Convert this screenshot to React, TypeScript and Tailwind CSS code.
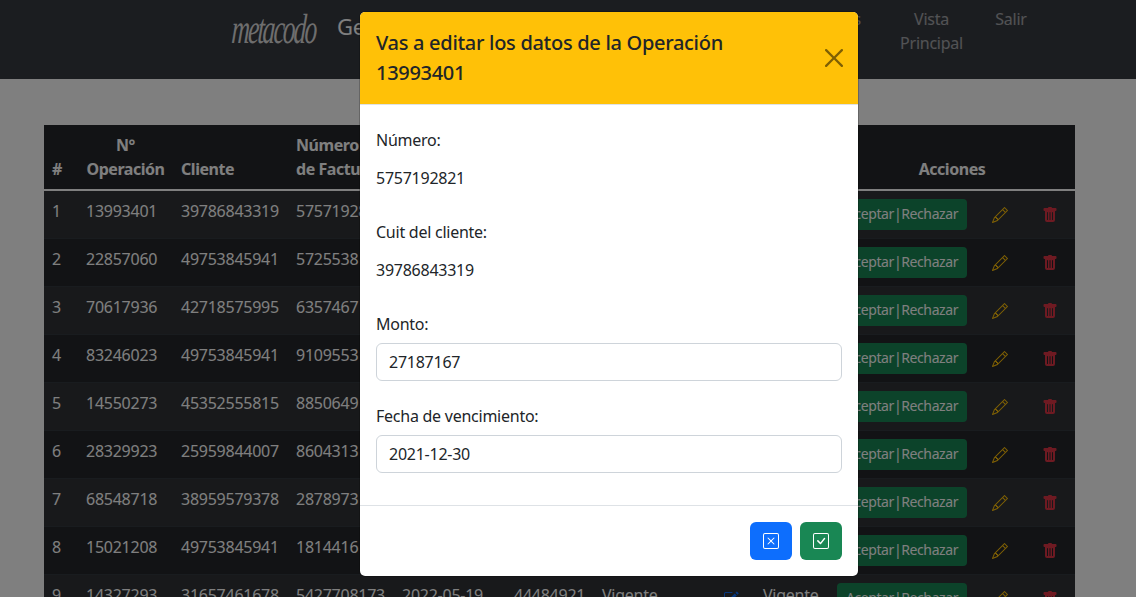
import { BsCheckSquare, BsPencil, BsPencilSquare, BsTrashFill, BsXSquare } from 'react-icons/bs';

type Row = {
  id: number;
  operation: string;
  client: string;
  invoice: string;
};

const rows: Row[] = [
  { id: 1, operation: '13993401', client: '39786843319', invoice: '5757192821' },
  { id: 2, operation: '22857060', client: '49753845941', invoice: '5725538' },
  { id: 3, operation: '70617936', client: '42718575995', invoice: '6357467' },
  { id: 4, operation: '83246023', client: '49753845941', invoice: '9109553' },
  { id: 5, operation: '14550273', client: '45352555815', invoice: '8850649' },
  { id: 6, operation: '28329923', client: '25959844007', invoice: '8604313' },
  { id: 7, operation: '68548718', client: '38959579378', invoice: '2878973' },
  { id: 8, operation: '15021208', client: '49753845941', invoice: '1814416' },
  { id: 9, operation: '14327293', client: '31657461678', invoice: '5427708173' },
];

export default function App() {
  return (
    <div className="relative h-[597px] w-[1136px] overflow-hidden bg-white font-['Noto_Sans',sans-serif] text-base tracking-[-0.25px] text-[#212529]">
      <nav className="flex h-[79px] bg-[#373a41]">
        <div className="ml-[232px] flex items-start">
          <span className="mt-[5px] w-[105px] origin-left -skew-x-6 scale-x-[0.6] whitespace-nowrap font-['Liberation_Serif',serif] text-[42px] italic leading-[48px] tracking-[-3px] text-[#ddd]">
            metacodo
          </span>
          <span className="mt-[10px] text-[22px] leading-[32px] text-white">Gestión</span>
        </div>
        <div className="ml-auto mr-[109px] flex gap-[32px] pt-[7px] text-center leading-6 text-white/55">
          <span className="w-[72px]">
            Clientes
            <br />
            del Cliente
          </span>
          <span className="w-[63px]">
            Vista
            <br />
            Principal
          </span>
          <span className="w-[32px]">Salir</span>
        </div>
      </nav>

      <div className="px-[44px] pt-[46px]">
        <table className="w-[1031px] table-fixed border-collapse bg-[#25272b] text-white">
          <colgroup>
            <col className="w-[34px]" />
            <col className="w-[95px]" />
            <col className="w-[115px]" />
            <col className="w-[106px]" />
            <col className="w-[112px]" />
            <col className="w-[88px]" />
            <col className="w-[121px]" />
            <col className="w-[40px]" />
            <col className="w-[74px]" />
            <col className="w-[146px]" />
            <col className="w-[50px]" />
            <col className="w-[50px]" />
          </colgroup>
          <thead>
            <tr className="h-[64px] border-b-2 border-white align-bottom font-bold tracking-[-0.45px]">
              <th className="p-2 text-left">#</th>
              <th className="p-2 text-center">
                N°
                <br />
                Operación
              </th>
              <th className="p-2 text-left">Cliente</th>
              <th className="p-2 text-left">
                Número
                <br />
                de Factura
              </th>
              <th colSpan={5}></th>
              <th colSpan={3} className="p-2 text-center">
                Acciones
              </th>
            </tr>
          </thead>
          <tbody>
            {rows.map((row) => (
              <tr key={row.id} className="h-[48px] border-b border-[#32383e] align-top odd:bg-[#303337]">
                <td className="p-2">{row.id}</td>
                <td className="p-2">{row.operation}</td>
                <td className="p-2">{row.client}</td>
                <td className="p-2">{row.invoice}</td>
                <td className="p-2 whitespace-nowrap">{row.id === 9 ? '2022-05-19' : ''}</td>
                <td className="p-2">{row.id === 9 ? '44484921' : ''}</td>
                <td className="p-2">{row.id === 9 ? 'Vigente' : ''}</td>
                <td className="p-2 text-[#0d6efd]">
                  {row.id === 9 && <BsPencilSquare size={16} className="mt-[8px]" />}
                </td>
                <td className="p-2">{row.id === 9 ? 'Vigente' : ''}</td>
                <td className="p-2">
                  <button className="h-[31px] w-[130px] whitespace-nowrap rounded bg-[#198754] pb-[1px] text-sm tracking-[-0.4px] text-white">
                    Aceptar|Rechazar
                  </button>
                </td>
                <td className="p-2 text-[#ffc107]">
                  <BsPencil size={16} className="mx-auto mt-[8px]" />
                </td>
                <td className="p-2 text-[#dc3545]">
                  <BsTrashFill size={16} className="mx-auto mt-[8px]" />
                </td>
              </tr>
            ))}
          </tbody>
        </table>
      </div>

      {/* backdrop + modal */}
      <div className="absolute inset-0 bg-black/50"></div>
      <div className="absolute left-[359px] top-[11px] flex h-[566px] w-[500px] flex-col overflow-hidden rounded-md border border-black/20 bg-white bg-clip-padding">
        <div className="flex items-center justify-between border-b border-[#dee2e6] bg-[#ffc107] px-4 py-[16px]">
          <h5 className="w-[420px] text-xl font-medium leading-[30px] tracking-[-0.3px]">
            Vas a editar los datos de la Operación 13993401
          </h5>
          <svg width="18" height="18" viewBox="0 0 16 16" fill="#000" opacity="0.5" className="-mr-[1px]">
            <path d="M.293.293a1 1 0 0 1 1.414 0L8 6.586 14.293.293a1 1 0 1 1 1.414 1.414L9.414 8l6.293 6.293a1 1 0 0 1-1.414 1.414L8 9.414l-6.293 6.293a1 1 0 0 1-1.414-1.414L6.586 8 .293 1.707a1 1 0 0 1 0-1.414z" />
          </svg>
        </div>
        <div className="flex-1 px-4 pt-[23px]">
          <p className="leading-6">Número:</p>
          <p className="mt-[14px] leading-6">5757192821</p>
          <p className="mt-[30px] leading-6">Cuit del cliente:</p>
          <p className="mt-[14px] leading-6">39786843319</p>
          <p className="mt-[30px] leading-6">Monto:</p>
          <input
            readOnly
            value="27187167"
            className="mt-[7px] block h-[38px] w-full rounded-md border border-[#ced4da] px-3 text-[#212529]"
          />
          <p className="mt-[23px] leading-6">Fecha de vencimiento:</p>
          <input
            readOnly
            value="2021-12-30"
            className="mt-[7px] block h-[38px] w-full rounded-md border border-[#ced4da] px-3 text-[#212529]"
          />
        </div>
        <div className="flex h-[71px] justify-end gap-2 border-t border-[#dee2e6] px-4 pt-[16px]">
          <button className="flex h-[38px] w-[42px] items-center justify-center rounded-md bg-[#0d6efd] text-white">
            <BsXSquare size={16} />
          </button>
          <button className="flex h-[38px] w-[42px] items-center justify-center rounded-md bg-[#198754] text-white">
            <BsCheckSquare size={16} />
          </button>
        </div>
      </div>
    </div>
  );
}
